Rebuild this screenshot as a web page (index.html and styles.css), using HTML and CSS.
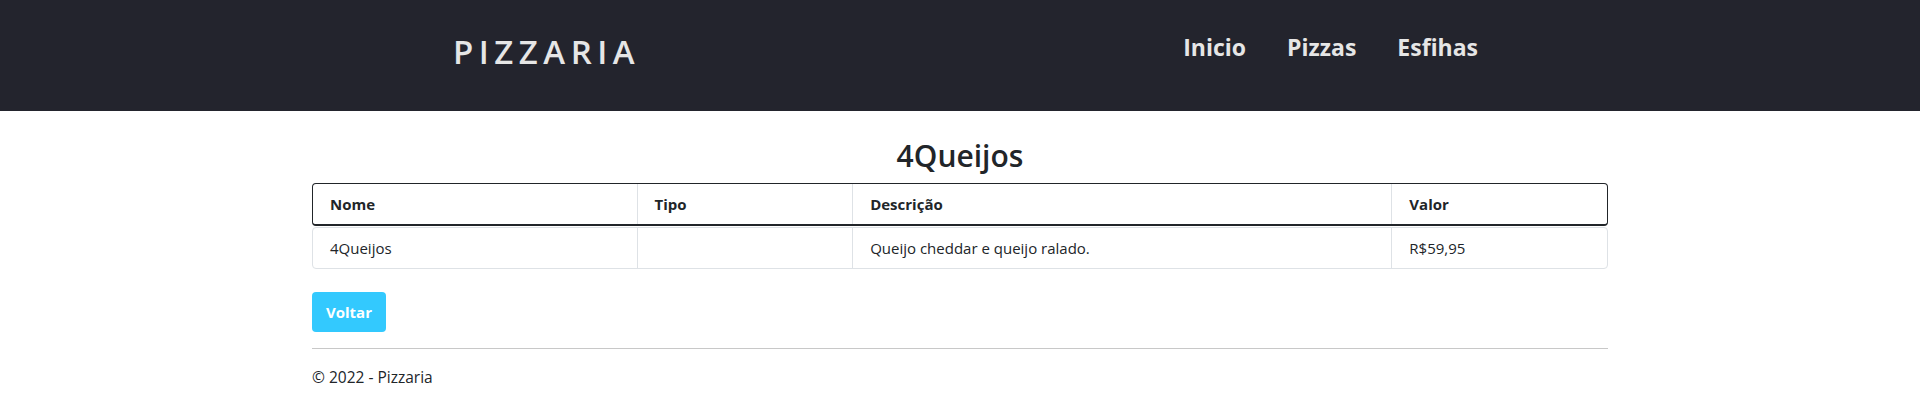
FILE: index.html
```html
<!DOCTYPE html>
<html lang="pt-br">
<head>
<meta charset="utf-8">
<title>4Queijos - Pizzaria</title>
<link rel="stylesheet" href="styles.css">
</head>
<body>
<header class="navbar">
  <div class="nav-inner">
    <a class="brand" href="#">PIZZARIA</a>
    <nav class="links">
      <a href="#">Inicio</a>
      <a href="#">Pizzas</a>
      <a href="#">Esfihas</a>
    </nav>
  </div>
</header>
<main class="container">
  <h3 class="title">4Queijos</h3>
  <div class="grid-table">
    <div class="trow thead">
      <div class="cell">Nome</div>
      <div class="cell">Tipo</div>
      <div class="cell">Descrição</div>
      <div class="cell">Valor</div>
    </div>
    <div class="trow tbody">
      <div class="cell">4Queijos</div>
      <div class="cell"></div>
      <div class="cell">Queijo cheddar e queijo ralado.</div>
      <div class="cell">R$59,95</div>
    </div>
  </div>
  <div class="actions"><a class="btn" href="#">Voltar</a></div>
  <hr class="rule">
  <footer class="footer">© 2022 - Pizzaria</footer>
</main>
</body>
</html>
```
FILE: styles.css
```css
* { box-sizing: border-box; }
html, body { margin: 0; padding: 0; }
body {
  font-family: "Open Sans", "Noto Sans", sans-serif;
  font-size: 16px;
  color: #212529;
  background: #fff;
}
a { text-decoration: none; }

.navbar {
  background: #23242d;
  height: 111px;
}
.nav-inner {
  width: 1296px;
  margin: 0 auto;
  height: 100%;
  display: flex;
  justify-content: space-between;
  padding: 0 130px 0 141px;
}
.brand {
  color: #e6e6e6;
  font-size: 33px;
  font-weight: 600;
  letter-spacing: 5.5px;
  line-height: 40px;
  margin-top: 32px;
  height: 40px;
}
.links {
  display: flex;
  gap: 41px;
  margin-top: 30px;
  height: 34px;
}
.links a {
  color: #e6e6e6;
  font-weight: 700;
  font-size: 23px;
  line-height: 34px;
}

.container {
  width: 1296px;
  margin: 0 auto;
}
.title {
  margin: 0;
  padding-top: 27px;
  text-align: center;
  font-size: 30px;
  font-weight: 600;
  line-height: 36px;
  height: 72px;
}
.trow {
  display: grid;
  grid-template-columns: 3fr 2fr 5fr 2fr;
  border-radius: 4px;
  font-size: 15px;
  line-height: 20px;
}
.thead {
  border: 1px solid #212529;
  border-bottom-width: 2px;
  font-weight: 700;
}
.tbody {
  border: 1px solid #dee2e6;
  margin-top: 1px;
}
.cell {
  padding: 10px 16px 10px 17px;
  border-left: 1px solid #dee2e6;
}
.cell:first-child { border-left: 0; }

.actions { margin-top: 23px; display: flex; }
.btn {
  display: inline-block;
  background: #33c9fe;
  color: #fff;
  font-weight: 700;
  font-size: 15px;
  line-height: 24px;
  padding: 8px 14px;
  border-radius: 4px;
}
.rule {
  margin: 16px 0 0;
  border: 0;
  border-top: 1px solid #c8c8c8;
}
.footer {
  font-size: 15.5px;
  line-height: 24px;
  padding-top: 16px;
}
```
